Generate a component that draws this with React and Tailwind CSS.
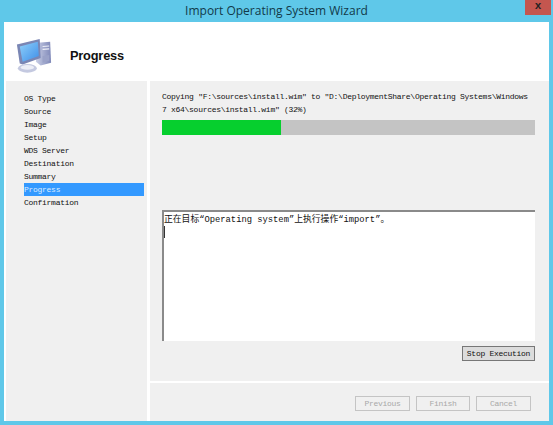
import React from 'react';

const STEPS = ['OS Type', 'Source', 'Image', 'Setup', 'WDS Server', 'Destination', 'Summary', 'Progress', 'Confirmation'];

const mono = "font-['Liberation_Mono','Noto_Sans_CJK_SC',monospace]";

const PcIcon = () => (
  <svg width="38" height="38" viewBox="0 0 40 40">
    <defs>
      <linearGradient id="scr" x1="0" y1="0" x2="1" y2="1">
        <stop offset="0" stopColor="#8fd0fa" />
        <stop offset="1" stopColor="#3f8fe8" />
      </linearGradient>
      <linearGradient id="tower" x1="0" y1="0" x2="1" y2="0">
        <stop offset="0" stopColor="#c9cfe6" />
        <stop offset="1" stopColor="#7f88b8" />
      </linearGradient>
    </defs>
    <path d="M24 6 L37 5 L38 27 L27 30 L22 26 Z" fill="url(#tower)" />
    <path d="M29 10 L36 9.5 M29 13 L36 12.5" stroke="#eef0f8" strokeWidth="1.2" />
    <path d="M29 20 L36 19 L36 25 L29 27 Z" fill="#9aa2c8" />
    <path d="M2 8 L26 2 L27 22 L8 29 L5 28 Z" fill="#7a86b4" />
    <path d="M5 10 L24 5 L25 20 L8 26 Z" fill="url(#scr)" />
    <ellipse cx="13" cy="33" rx="10" ry="4.5" fill="#c4c9e0" />
    <ellipse cx="13" cy="32" rx="7" ry="2.5" fill="#eceef6" />
  </svg>
);

const WizButton = ({ label, disabled, className = '' }) => (
  <div
    className={`flex h-[15px] items-center justify-center border text-[8px] tracking-[-0.28px] ${
      disabled ? 'border-[#c4c4c4] text-[#a8a8a8]' : 'border-[#777] bg-[#dcdcdc] text-[#111]'
    } ${className}`}
  >
    {label}
  </div>
);

export default function App() {
  return (
    <div className={`flex h-[425px] w-[553px] flex-col overflow-hidden bg-[#5fc8e9] ${mono}`}>
      {/* title bar */}
      <div className="relative flex h-[22px] shrink-0 items-center justify-center">
        <span className="font-['Open_Sans',sans-serif] text-[12px] font-medium text-[#123a4a]">Import Operating System Wizard</span>
        <div className="absolute right-[2px] top-0 flex h-[15px] w-[26px] items-center justify-center bg-[#c4564f] pb-[2px] text-[11px] font-bold text-[#222]">
          x
        </div>
      </div>

      <div className="mx-[4px] mb-[4px] flex min-h-0 flex-1 flex-col bg-white">
        {/* header */}
        <div className="flex h-[59px] shrink-0 items-center pl-[11px] pt-[8px]">
          <PcIcon />
          <span className="ml-[17px] font-['Liberation_Sans',sans-serif] text-[12.8px] font-bold tracking-[-0.2px] text-[#111]">Progress</span>
        </div>

        <div className="flex min-h-0 flex-1 pl-[2px]">
          {/* steps */}
          <div className="flex w-[141px] shrink-0 flex-col bg-[#f0f0f0] pl-[18px] pr-[3px] pt-[11px]">
            {STEPS.map((step) => (
              <div
                key={step}
                className={`flex h-[13px] items-center text-[8px] tracking-[-0.28px] ${
                  step === 'Progress' ? 'bg-[#3399ff] text-[#dcecff]' : 'text-[#111]'
                }`}
              >
                {step}
              </div>
            ))}
          </div>

          {/* content */}
          <div className="ml-[3px] flex min-w-0 flex-1 flex-col">
            <div className="flex h-[300px] shrink-0 flex-col bg-[#f0f0f0] pl-[12px] pr-[14px] pt-[10px]">
              <p className="h-[24px] text-[8px] leading-[12.5px] tracking-[-0.285px] whitespace-pre-wrap text-[#111]">
                {'Copying "F:\\sources\\install.wim" to "D:\\DeploymentShare\\Operating Systems\\Windows\n7 x64\\sources\\install.wim" (32%)'}
              </p>
              <div className="mt-[5px] h-[15px] bg-[#c4c4c4]">
                <div className="h-full w-[32%] bg-[#06cf2e]" />
              </div>
              <div className="mt-[75px] h-[131px] shrink-0 border-l-2 border-t-2 border-[#8a8a8a] bg-white pt-[2px]">
                <p className="text-[8.8px] leading-[12px] text-[#111]">正在目标“Operating system”上执行操作“import”。</p>
                <div className="h-[12px] w-px bg-[#333]" />
              </div>
              <div className="mt-[5px] flex justify-end">
                <WizButton label="Stop Execution" className="w-[73px]" />
              </div>
            </div>
            <div className="h-[2px] shrink-0 bg-white" />
            <div className="flex flex-1 justify-end gap-[6px] bg-[#f0f0f0] pr-[18px] pt-[13px]">
              <WizButton label="Previous" disabled className="w-[55px]" />
              <WizButton label="Finish" disabled className="w-[54px]" />
              <WizButton label="Cancel" disabled className="w-[55px]" />
            </div>
          </div>
        </div>
      </div>
    </div>
  );
}
